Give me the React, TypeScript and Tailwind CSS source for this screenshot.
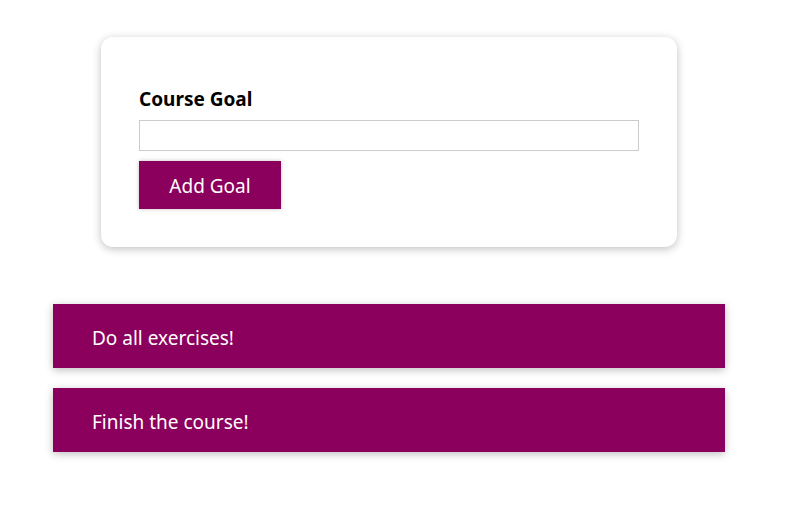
export default function App() {
  const font = { fontFamily: '"Noto Sans", "Noto Sans CJK KR", sans-serif' };
  return (
    <div className="min-h-[520px] w-[778px] bg-white pt-[37px]" style={font}>
      <form
        className="mx-auto w-[576px] rounded-[12px] bg-white px-[38px] pt-[49px] pb-[38px] shadow-[0_2px_8px_rgba(0,0,0,0.25)]"
        onSubmit={(e) => e.preventDefault()}
      >
        <label className="mb-[8px] block text-[19px] font-bold leading-[26px] text-black">Course Goal</label>
        <input type="text" className="block h-[31px] w-[500px] border border-[#ccc] outline-none" />
        <button
          type="submit"
          className="mt-[10px] flex h-[48px] w-[142px] items-center justify-center bg-[#8b005d] pt-[2px] text-[19px] text-white shadow-[0_0_4px_rgba(0,0,0,0.26)]"
        >
          Add Goal
        </button>
      </form>
      <ul className="mx-auto mt-[57px] flex w-[672px] flex-col gap-[20px]">
        {["Do all exercises!", "Finish the course!"].map((g) => (
          <li
            key={g}
            className="flex h-[64px] items-center bg-[#8b005d] px-[39px] pt-[4px] text-[19px] text-white shadow-[0_2px_8px_rgba(0,0,0,0.26)]"
          >
            {g}
          </li>
        ))}
      </ul>
    </div>
  );
}
